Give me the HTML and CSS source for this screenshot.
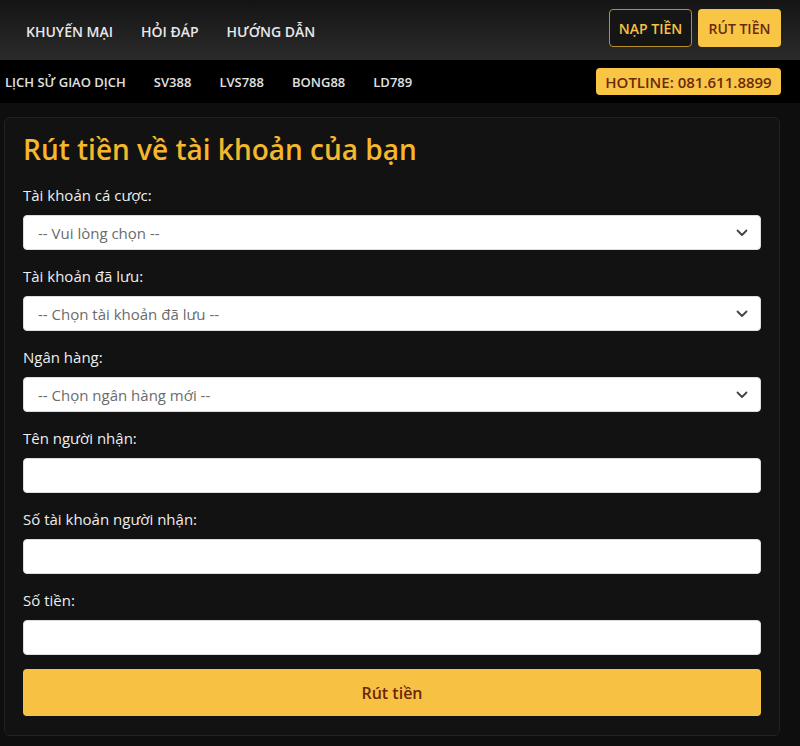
FILE: index.html
```html
<!DOCTYPE html>
<html lang="vi">
<head>
<meta charset="utf-8">
<title>Rút tiền</title>
<link rel="stylesheet" href="styles.css">
</head>
<body>
<header class="topbar">
  <nav class="main-nav">
    <a href="#">KHUYẾN MẠI</a>
    <a href="#">HỎI ĐÁP</a>
    <a href="#">HƯỚNG DẪN</a>
  </nav>
  <div class="actions">
    <a class="btn btn-outline" href="#">NẠP TIỀN</a>
    <a class="btn btn-solid" href="#">RÚT TIỀN</a>
  </div>
</header>
<div class="subbar">
  <nav class="sub-nav">
    <a href="#">LỊCH SỬ GIAO DỊCH</a>
    <a href="#">SV388</a>
    <a href="#">LVS788</a>
    <a href="#">BONG88</a>
    <a href="#">LD789</a>
  </nav>
  <span class="hotline">HOTLINE: 081.611.8899</span>
</div>
<main class="page">
  <section class="card">
    <h1 class="title">Rút tiền về tài khoản của bạn</h1>
    <form class="form">
      <div class="field">
        <label class="label">Tài khoản cá cược:</label>
        <div class="select"><span>-- Vui lòng chọn --</span><svg class="chev" viewBox="0 0 12 8" width="12" height="8"><path d="M1.5 1.5 L6 6 L10.5 1.5" fill="none" stroke="#444" stroke-width="1.8" stroke-linecap="round" stroke-linejoin="round"/></svg></div>
      </div>
      <div class="field">
        <label class="label">Tài khoản đã lưu:</label>
        <div class="select"><span>-- Chọn tài khoản đã lưu --</span><svg class="chev" viewBox="0 0 12 8" width="12" height="8"><path d="M1.5 1.5 L6 6 L10.5 1.5" fill="none" stroke="#444" stroke-width="1.8" stroke-linecap="round" stroke-linejoin="round"/></svg></div>
      </div>
      <div class="field">
        <label class="label">Ngân hàng:</label>
        <div class="select"><span>-- Chọn ngân hàng mới --</span><svg class="chev" viewBox="0 0 12 8" width="12" height="8"><path d="M1.5 1.5 L6 6 L10.5 1.5" fill="none" stroke="#444" stroke-width="1.8" stroke-linecap="round" stroke-linejoin="round"/></svg></div>
      </div>
      <div class="field">
        <label class="label">Tên người nhận:</label>
        <div class="input"></div>
      </div>
      <div class="field">
        <label class="label">Số tài khoản người nhận:</label>
        <div class="input"></div>
      </div>
      <div class="field">
        <label class="label">Số tiền:</label>
        <div class="input"></div>
      </div>
      <button type="button" class="submit">Rút tiền</button>
    </form>
  </section>
</main>
</body>
</html>
```
FILE: styles.css
```css
* { box-sizing: border-box; }
html, body { margin: 0; padding: 0; }
body {
  background: #0e0e0e;
  font-family: "Open Sans", "Noto Sans", sans-serif;
  color: #eee;
  width: 800px;
  height: 746px;
  overflow: hidden;
}
a { text-decoration: none; }

.topbar {
  height: 60px;
  background: linear-gradient(#141414, #2b2b2b);
  display: flex;
  justify-content: space-between;
  padding: 0 19px 0 26px;
}
.main-nav {
  display: flex;
  align-items: center;
  gap: 28px;
}
.main-nav a {
  color: #e8e8e8;
  font-size: 14px;
  font-weight: 600;
  padding-top: 2px;
}
.actions {
  display: flex;
  gap: 6px;
  padding-top: 9px;
}
.btn {
  height: 38px;
  width: 83px;
  display: flex;
  align-items: center;
  justify-content: center;
  font-size: 14px;
  font-weight: 600;
  border-radius: 4px;
}
.btn-outline {
  background: #151515;
  border: 1px solid #b98f2c;
  color: #f7c244;
}
.btn-solid {
  background: #f8c545;
  color: #6a2a0c;
}

.subbar {
  height: 43px;
  background: #000;
  display: flex;
  align-items: center;
  justify-content: space-between;
  padding: 0 19px 0 5px;
}
.sub-nav {
  display: flex;
  gap: 28px;
}
.sub-nav a {
  color: #e0e0e0;
  font-size: 13px;
  font-weight: 600;
}
.hotline {
  background: #f8c545;
  color: #6a2a0c;
  font-size: 15px;
  font-weight: 600;
  height: 27px;
  width: 185px;
  display: flex;
  align-items: center;
  justify-content: center;
  border-radius: 4px;
}

.page {
  padding: 14px 20px 0 4px;
}
.card {
  background: #121212;
  border: 1px solid #222;
  border-radius: 6px;
  height: 619px;
  padding: 13px 18px 0 18px;
}
.title {
  margin: 0 0 18px;
  font-size: 28px;
  line-height: 36px;
  font-weight: 600;
  color: #f5b72b;
}
.form {
  display: flex;
  flex-direction: column;
}
.field {
  display: flex;
  flex-direction: column;
  margin-bottom: 16px;
}
.label {
  font-size: 15px;
  line-height: 21px;
  color: #eee;
  margin-bottom: 9px;
}
.select, .input {
  height: 35px;
  background: #fff;
  border-radius: 4px;
  border: 1px solid #ddd;
}
.select {
  display: flex;
  align-items: center;
  justify-content: space-between;
  padding: 0 12px 0 14px;
  color: #6b6b6b;
  font-size: 15px;
}
.chev { display: block; }
.submit {
  margin-top: -2px;
  height: 47px;
  width: 100%;
  border: 0;
  border-radius: 4px;
  background: #f7c244;
  color: #6a2609;
  font-family: inherit;
  font-size: 16px;
  font-weight: 600;
}
```
